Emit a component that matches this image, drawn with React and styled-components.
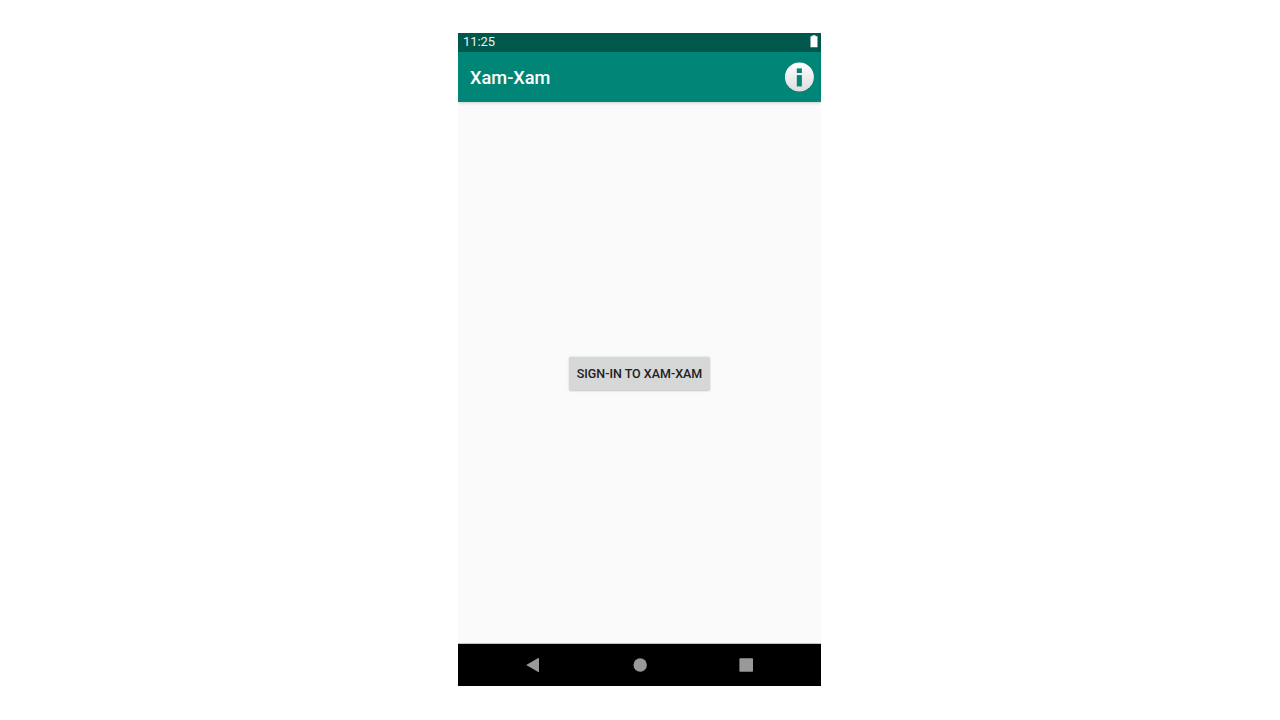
import React from "react";
import styled, { createGlobalStyle } from "styled-components";

const GlobalStyle = createGlobalStyle`
  * { box-sizing: border-box; }
  body { margin: 0; background: #fff; font-family: Roboto, "Liberation Sans", sans-serif; }
`;

const Page = styled.div`
  display: flex;
  justify-content: center;
  width: 1280px;
  height: 720px;
  padding: 33px 1px 34px 0;
  background: #fff;
`;

const Phone = styled.div`
  display: flex;
  flex-direction: column;
  width: 363px;
  height: 653px;
  background: #fafafa;
`;

const StatusBar = styled.div`
  display: flex;
  justify-content: space-between;
  align-items: flex-start;
  height: 19px;
  padding: 0 3px 0 5px;
  background: #00574b;
  color: #e9f1f0;
  font-size: 13px;
  line-height: 18px;
  letter-spacing: -0.1px;
`;

const AppBar = styled.header`
  display: flex;
  justify-content: space-between;
  align-items: center;
  height: 50px;
  padding: 0 6px 0 12px;
  background: #008577;
  box-shadow: 0 1px 3px rgba(0, 0, 0, 0.18);
  clip-path: inset(0 0 -6px 0);
`;

const Title = styled.h1`
  margin: 0;
  padding-top: 2px;
  color: #fff;
  font-size: 18.2px;
  font-weight: 500;
  line-height: 24px;
`;

const InfoButton = styled.button`
  display: block;
  width: 32px;
  height: 32px;
  padding: 0;
  border: 0;
  background: none;
`;

const Content = styled.main`
  display: flex;
  flex: 1;
  justify-content: center;
  align-items: center;
  border-bottom: 1px solid #c4c4c4;
`;

const SignInButton = styled.button`
  width: 141px;
  height: 33px;
  margin-top: 1px;
  padding: 1px 0 0;
  border: 0;
  border-radius: 2px;
  background: #d6d7d7;
  box-shadow: 0 0.5px 2px rgba(0, 0, 0, 0.22);
  color: #212121;
  font-family: inherit;
  font-size: 12.5px;
  font-weight: 500;
  line-height: 32px;
  white-space: nowrap;
`;

const NavBar = styled.nav`
  display: flex;
  justify-content: space-between;
  align-items: center;
  height: 42px;
  padding: 0 67px;
  background: #000;
`;

const Icon = styled.svg`
  display: block;
  flex: none;
  fill: #999;
`;

const InfoIcon = () => (
  <Icon width="32" height="32" viewBox="0 0 32 32">
    <defs>
      <linearGradient id="disc" x1="0" y1="0" x2="0" y2="1">
        <stop offset="0" stopColor="#ffffff" />
        <stop offset="1" stopColor="#dddddd" />
      </linearGradient>
    </defs>
    <circle cx="16.4" cy="16.3" r="14.7" fill="#004f46" opacity="0.25" />
    <circle cx="16.4" cy="16" r="14.5" fill="url(#disc)" />
    <rect x="13.8" y="7.4" width="5.1" height="4.6" fill="#008577" />
    <rect x="13.8" y="14.1" width="5.1" height="11.3" fill="#008577" />
  </Icon>
);

export default function App() {
  return (
    <Page>
      <GlobalStyle />
      <Phone>
        <StatusBar>
          <span>11:25</span>
          <Icon width="8" height="15" viewBox="0 0 8 15">
            <path d="M2.4 2.2h3.2v1h1.9v11H.5v-11h1.9z" fill="#fff" />
          </Icon>
        </StatusBar>
        <AppBar>
          <Title>Xam-Xam</Title>
          <InfoButton aria-label="Info">
            <InfoIcon />
          </InfoButton>
        </AppBar>
        <Content>
          <SignInButton>SIGN-IN TO XAM-XAM</SignInButton>
        </Content>
        <NavBar>
          <Icon width="16" height="16" viewBox="0 0 16 16">
            <path d="M1.2 8 13.2 1.1q.8-.3.8.5v12.8q0 .8-.8.5z" />
          </Icon>
          <Icon width="16" height="16" viewBox="0 0 16 16">
            <circle cx="8.2" cy="8" r="6.7" />
          </Icon>
          <Icon width="16" height="16" viewBox="0 0 16 16">
            <rect x="1.4" y="1.2" width="13.6" height="13.6" rx=".8" />
          </Icon>
        </NavBar>
      </Phone>
    </Page>
  );
}
